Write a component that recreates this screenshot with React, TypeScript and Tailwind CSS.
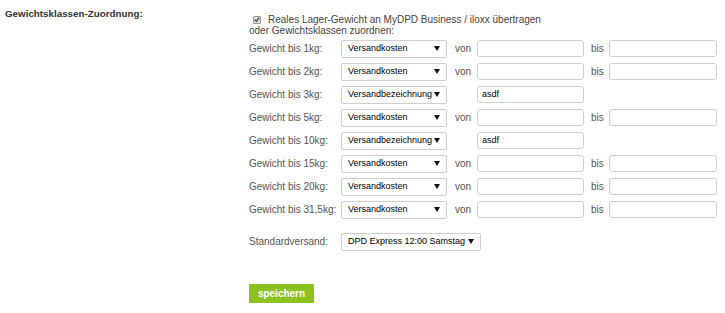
import React from "react";

type Row = { label: string; kind: "kosten" | "bez" };

const rows: Row[] = [
  { label: "Gewicht bis 1kg:", kind: "kosten" },
  { label: "Gewicht bis 2kg:", kind: "kosten" },
  { label: "Gewicht bis 3kg:", kind: "bez" },
  { label: "Gewicht bis 5kg:", kind: "kosten" },
  { label: "Gewicht bis 10kg:", kind: "bez" },
  { label: "Gewicht bis 15kg:", kind: "kosten" },
  { label: "Gewicht bis 20kg:", kind: "kosten" },
  { label: "Gewicht bis 31,5kg:", kind: "kosten" },
];

function Arrow() {
  return (
    <svg width="6" height="5" viewBox="0 0 6 5" className="shrink-0">
      <path d="M0 0 L6 0 L3 5 Z" fill="#111" />
    </svg>
  );
}

function FakeSelect({ text, width }: { text: string; width: string }) {
  return (
    <div
      className={`${width} h-[18px] border border-[#cfcfcf] rounded-[2px] bg-white flex items-center justify-between pl-[6px] pr-[6px] text-[#000] text-[9px] whitespace-nowrap`}
    >
      <span>{text}</span>
      <Arrow />
    </div>
  );
}

function TextBox({ value, width }: { value?: string; width: string }) {
  return (
    <div
      className={`${width} h-[17px] border border-[#cfcfcf] rounded-[3px] bg-white flex items-center pl-[4px] text-[#000] text-[9px]`}
    >
      {value}
    </div>
  );
}

export default function App() {
  return (
    <div className="w-[725px] h-[313px] bg-white font-['Liberation_Sans',Arial,sans-serif] text-[10px] flex">
      <div className="w-[249px] shrink-0 pl-[5px] pt-[8px] font-bold text-[#333] leading-[11px] text-[9.8px]">
        Gewichtsklassen-Zuordnung:
      </div>
      <div className="pt-[14px] text-[#555]">
        <div className="flex items-center h-[11px] leading-[11px]">
          <div className="ml-[4px] w-[8px] h-[8px] rounded-[1px] border border-[#9a9a9a] bg-[#dcdcdc] flex items-center justify-center">
            <svg width="7" height="7" viewBox="0 0 7 7">
              <path d="M1 3.8 L2.8 5.6 L6 1.2" stroke="#333" strokeWidth="1.4" fill="none" />
            </svg>
          </div>
          <span className="ml-[7px] text-[#444]">
            Reales Lager-Gewicht an MyDPD Business / iloxx übertragen
          </span>
        </div>
        <div className="h-[11px] leading-[11px] text-[#444]">oder Gewichtsklassen zuordnen:</div>
        <div className="mt-[1px]">
          {rows.map((r) => (
            <div key={r.label} className="flex items-center h-[23px]">
              <div className="w-[92px] shrink-0">{r.label}</div>
              {r.kind === "kosten" ? (
                <>
                  <FakeSelect text="Versandkosten" width="w-[106px]" />
                  <div className="w-[30px] pl-[8px]">von</div>
                  <TextBox width="w-[107px]" />
                  <div className="w-[25px] pl-[7px]">bis</div>
                  <TextBox width="w-[108px]" />
                </>
              ) : (
                <>
                  <FakeSelect text="Versandbezeichnung" width="w-[106px]" />
                  <div className="w-[30px]" />
                  <TextBox value="asdf" width="w-[107px]" />
                </>
              )}
            </div>
          ))}
        </div>
        <div className="flex items-center h-[23px] mt-[9px]">
          <div className="w-[92px] shrink-0">Standardversand:</div>
          <FakeSelect text="DPD Express 12:00 Samstag" width="w-[140px]" />
        </div>
        <button className="mt-[31px] w-[65px] h-[19px] bg-[#8cc220] text-white font-bold text-[10px] flex items-center justify-center rounded-[1px]">
          speichern
        </button>
      </div>
    </div>
  );
}
